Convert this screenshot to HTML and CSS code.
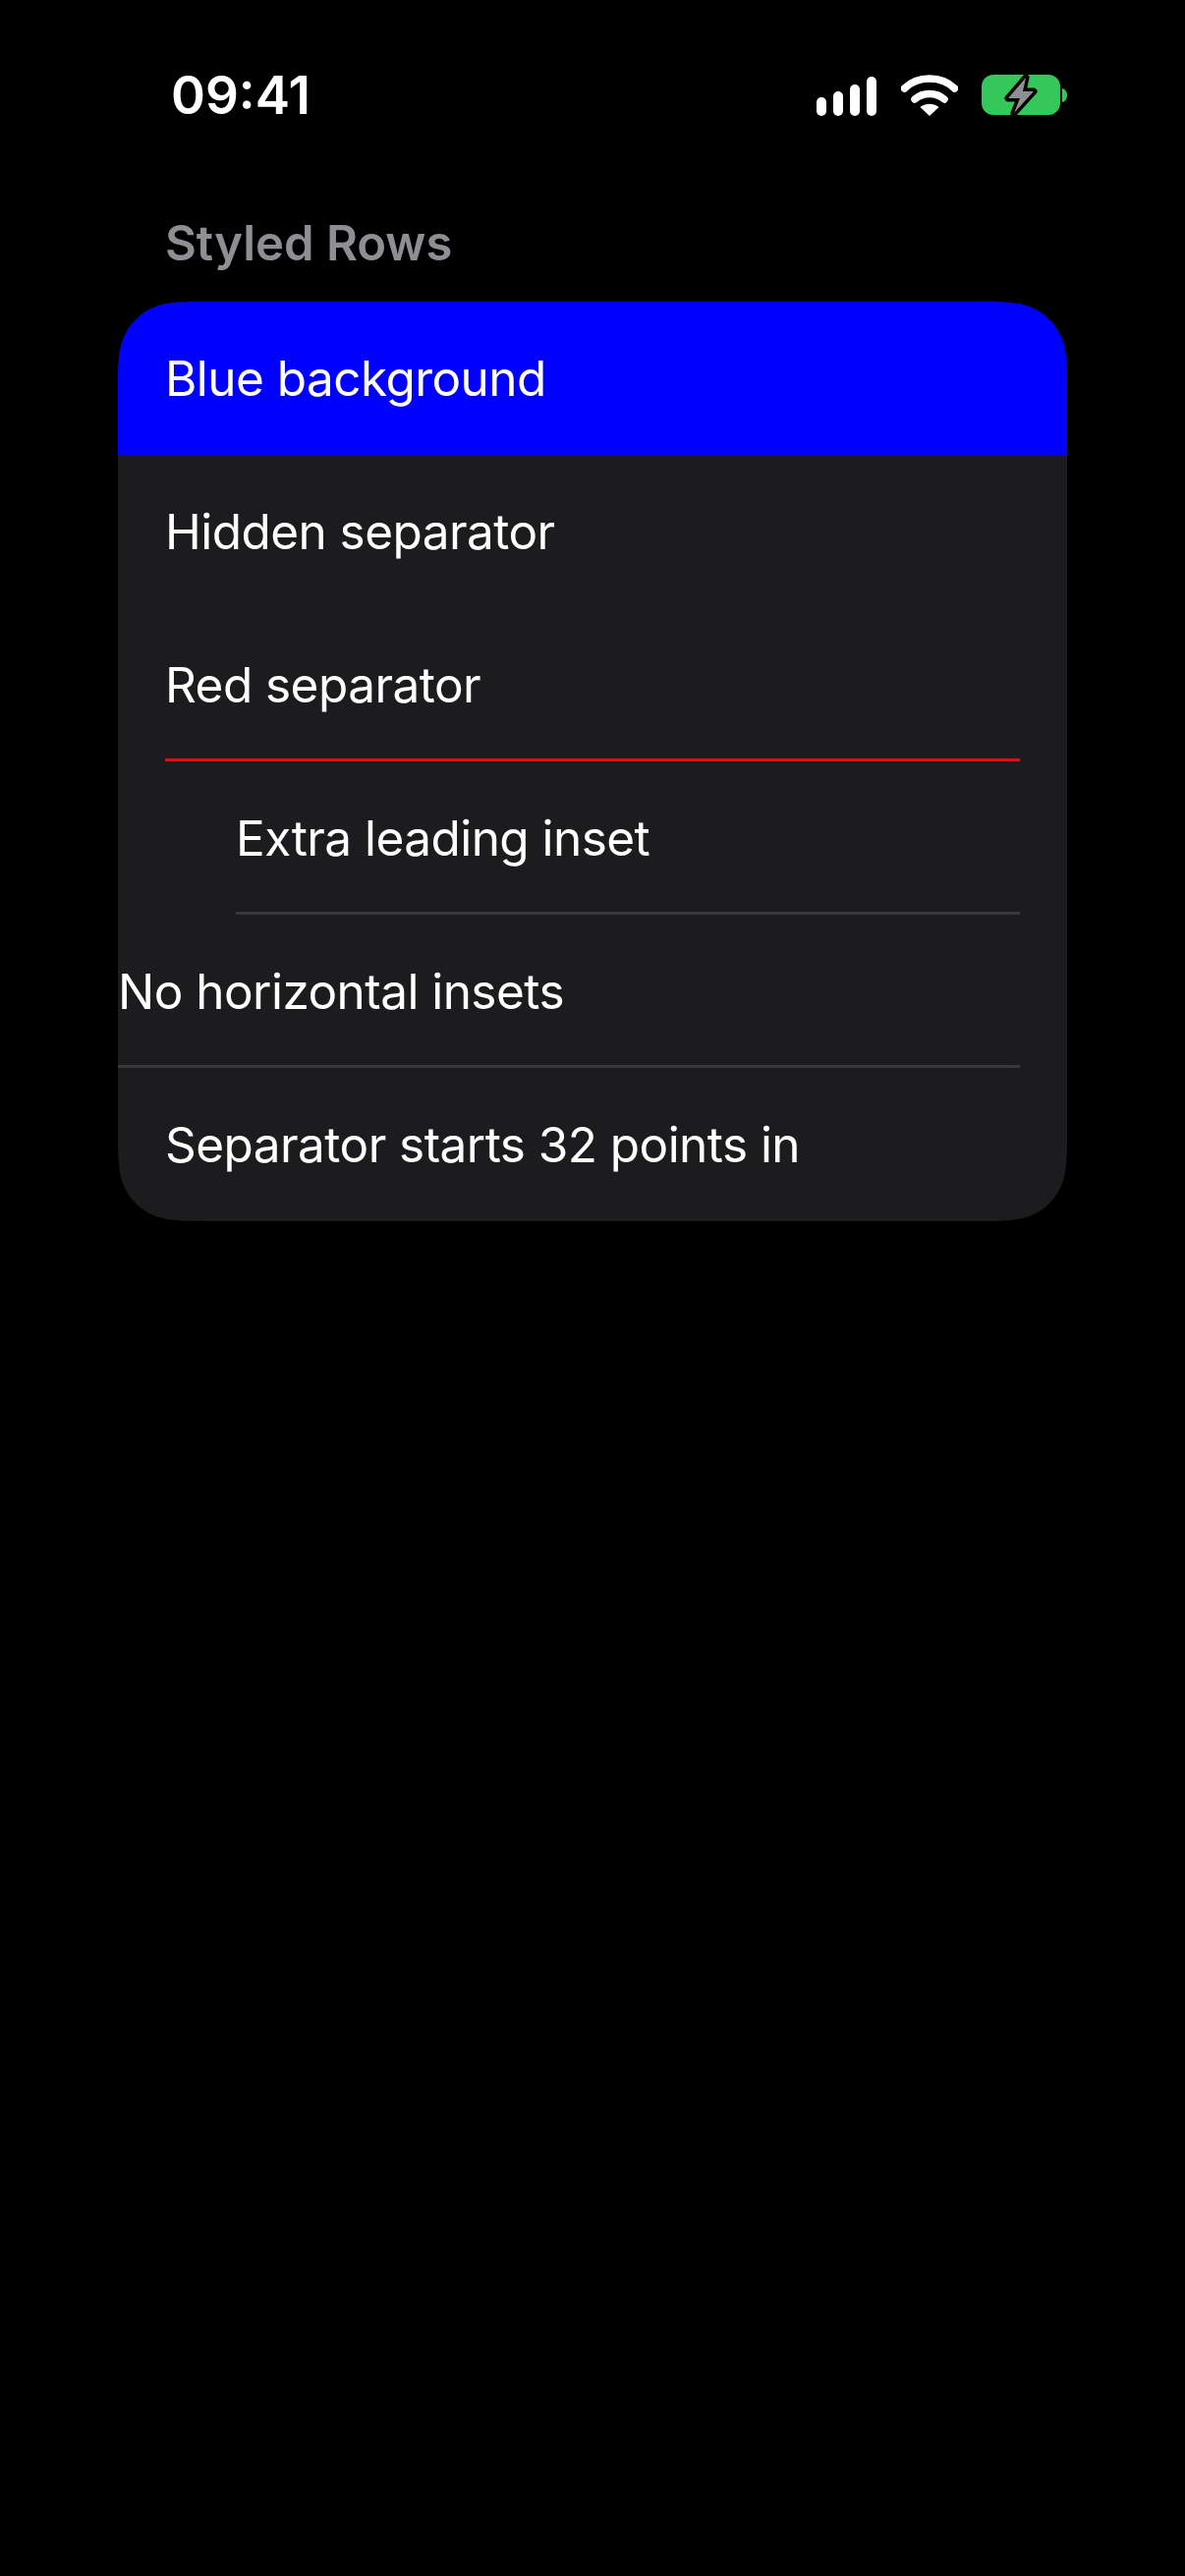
FILE: index.html
```html
<!DOCTYPE html>
<html lang="en">
<head>
<meta charset="utf-8">
<title>Styled Rows</title>
<link rel="stylesheet" href="styles.css">
</head>
<body>
<header class="status">
  <span class="time">09:41</span>
  <div class="status-icons">
    <svg class="ic-signal" width="62" height="40" viewBox="0 0 62 40"><rect x="0" y="21" width="10" height="19" rx="5" fill="#fff"/><rect x="17" y="15" width="10" height="25" rx="5" fill="#fff"/><rect x="34" y="8" width="10" height="32" rx="5" fill="#fff"/><rect x="51" y="0" width="10" height="40" rx="5" fill="#fff"/></svg>
    <svg class="ic-wifi" width="58" height="42" viewBox="0 0 58 42"><path d="M3.500 14C9.500 8 18.500 4 29 4s19.500 4 25.500 10" fill="none" stroke="#fff" stroke-width="7.500" stroke-linecap="round"/><path d="M14 25C18 21.500 23 19.500 29 19.500s11 2 15 5.500" fill="none" stroke="#fff" stroke-width="7.500" stroke-linecap="round"/><path d="M29 41 L20.500 33C22.500 31.500 25.500 30.500 29 30.500s6.500 1 8.500 2.500Z" fill="#fff" stroke="#fff" stroke-width="1.500" stroke-linejoin="round"/></svg>
    <svg class="ic-batt" width="88" height="42" viewBox="0 0 88 42"><rect x="0" y="0" width="80" height="41" rx="12" fill="#34c759"/><path d="M82 14c3 .5 5 3.500 5 7s-2 6.500-5 7Z" fill="#34c759"/><path d="M45 3 L27 24 H39 L33 39 L53 17 H42 Z" fill="#8e8e93" stroke="#000" stroke-width="7" stroke-linejoin="round" paint-order="stroke"/></svg>
  </div>
</header>
<main class="content">
  <h2 class="section-title">Styled Rows</h2>
  <section class="card">
    <div class="row row-blue"><span class="label">Blue background</span></div>
    <div class="row"><span class="label">Hidden separator</span></div>
    <div class="row"><span class="label">Red separator</span><div class="sep sep-red"></div></div>
    <div class="row row-extra"><span class="label">Extra leading inset</span><div class="sep"></div></div>
    <div class="row row-flush"><span class="label">No horizontal insets</span><div class="sep"></div></div>
    <div class="row"><span class="label">Separator starts 32 points in</span></div>
  </section>
</main>
</body>
</html>
```
FILE: styles.css
```css
* { box-sizing: border-box; }
html, body { margin: 0; padding: 0; }
body {
  width: 1206px;
  height: 2622px;
  background: #000;
  color: #fff;
  font-family: Inter, "Liberation Sans", sans-serif;
  overflow: hidden;
}
.status {
  height: 192px;
  padding: 68px 119px 0 174px;
  display: flex;
  justify-content: space-between;
  align-items: flex-start;
}
.time {
  font-size: 53px;
  line-height: 58px;
  font-weight: 600;
}
.status-icons {
  display: flex;
  align-items: flex-start;
  margin-top: 8px;
}
.ic-signal { margin-top: 2px; margin-right: 24px; }
.ic-wifi { margin-right: 24px; }
.ic-batt { overflow: visible; }
.content { padding: 0 120px; }
.section-title {
  margin: 0;
  height: 115px;
  padding: 28px 0 0 48px;
  font-size: 49px;
  line-height: 56px;
  font-weight: 600;
  color: #8e8e93;
}
.card {
  height: 936px;
  background: #1c1c1e;
  clip-path: path("M94.800 0 H871.200 C898.510 0 912.160 0 926.850 4.640 C942.890 10.480 955.520 23.110 961.360 39.150 C966 53.840 966 67.490 966 94.800 V841.200 C966 868.510 966 882.160 961.360 896.850 C955.520 912.890 942.890 925.520 926.850 931.360 C912.160 936 898.510 936 871.200 936 H94.800 C67.490 936 53.840 936 39.150 931.360 C23.110 925.520 10.480 912.890 4.640 896.850 C0 882.160 0 868.510 0 841.200 V94.800 C0 67.490 0 53.840 4.640 39.150 C10.480 23.110 23.110 10.480 39.150 4.640 C53.840 0 67.490 0 94.800 0 Z");
}
.row {
  height: 156px;
  display: flex;
  flex-direction: column;
}
.row-blue { background: #0000ff; }
.label {
  flex: 1;
  display: flex;
  align-items: center;
  padding-left: 48px;
  font-size: 49.500px;
  letter-spacing: -0.55px;
}
.row-extra .label { padding-left: 120px; }
.row-flush .label { padding-left: 0; }
.sep {
  height: 3px;
  flex: none;
  margin: -3px 48px 0 48px;
  background: #38383a;
}
.sep-red { background: #e01010; }
.row-extra .sep { margin-left: 120px; }
.row-flush .sep { margin-left: 0; }
```
